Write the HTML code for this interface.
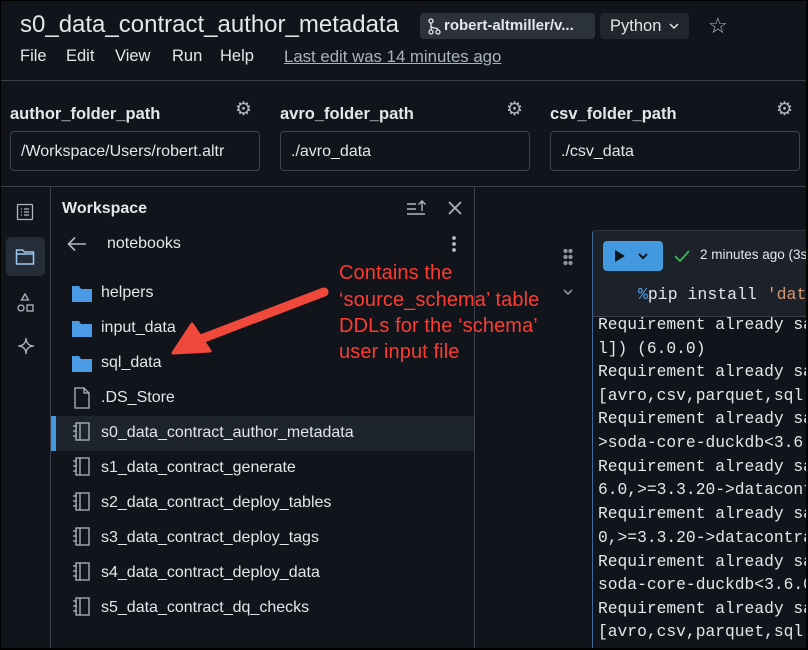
<!DOCTYPE html>
<html><head><meta charset="utf-8"><style>
*{margin:0;padding:0;box-sizing:border-box}
body{width:808px;height:650px;background:#000;overflow:hidden;font-family:"Liberation Sans",sans-serif;color:#e3e6ea;position:relative}
#f{position:absolute;left:1px;top:1px;width:805px;height:647px;background:#11151b;overflow:hidden}
.a{position:absolute;white-space:nowrap}
.inp{position:absolute;top:130px;height:40px;border:1px solid #3d444d;border-radius:4px;font-size:16px;padding:11px 10px;color:#e3e6ea;overflow:hidden;white-space:nowrap}
.lab{position:absolute;top:104px;font-size:16.5px;font-weight:bold}
.row{position:absolute;left:50px;width:423px;height:35px;font-size:16px}
.row span{position:absolute;left:50px;top:8px}
.mono{font-family:"Liberation Mono",monospace;font-size:16.3px;color:#e3e6ea;position:absolute;left:597px;white-space:nowrap}
.red{position:absolute;left:338px;color:#ff3b30;font-size:20px;white-space:nowrap;letter-spacing:0.1px}
.m{position:absolute;top:46px;font-size:16.5px}
</style></head><body><div id="f">
<div class="a" style="left:19px;top:10px;font-size:24px;font-weight:500">s0_data_contract_author_metadata</div>
<div class="a" style="left:419px;top:12px;width:175px;height:26px;background:#2b323b;border-radius:4px"></div>
<svg class="a" style="left:426px;top:17px" width="14" height="17" viewBox="0 0 14 17" fill="none" stroke="#e3e6ea" stroke-width="1.3"><circle cx="4" cy="3" r="2"/><circle cx="4" cy="14" r="2"/><circle cx="11" cy="14" r="2"/><path d="M4 5v7M4 8c0 3 7 1 7 4"/></svg>
<div class="a" style="left:443px;top:16px;font-size:15px;font-weight:bold">robert-altmiller/v...</div>
<div class="a" style="left:599px;top:12px;width:89px;height:26px;background:#21262d;border-radius:4px"></div>
<div class="a" style="left:609px;top:16px;font-size:16.5px">Python</div>
<svg class="a" style="left:668px;top:21px" width="10" height="8" viewBox="0 0 10 8"><path d="M1 2l4 4l4-4" stroke="#e3e6ea" stroke-width="1.5" fill="none"/></svg>
<div class="a" style="left:707px;top:12px;font-size:22px;color:#b0b7c0">☆</div>
<div class="m" style="left:19px">File</div>
<div class="m" style="left:65px">Edit</div>
<div class="m" style="left:114px">View</div>
<div class="m" style="left:171px">Run</div>
<div class="m" style="left:219px">Help</div>
<div class="m" style="left:283px;color:#a9b4c2;text-decoration:underline;font-size:16.8px">Last edit was 14 minutes ago</div>
<div class="a" style="left:0;top:79px;width:808px;height:1px;background:#3a414a"></div>
<div class="lab" style="left:9px">author_folder_path</div>
<div class="lab" style="left:279px">avro_folder_path</div>
<div class="lab" style="left:549px">csv_folder_path</div>
<div class="a" style="left:234px;top:97px;font-size:19px;color:#b0b7c0">⚙</div>
<div class="a" style="left:505px;top:97px;font-size:19px;color:#b0b7c0">⚙</div>
<div class="a" style="left:775px;top:97px;font-size:19px;color:#b0b7c0">⚙</div>
<div class="inp" style="left:9px;width:250px">/Workspace/Users/robert.altr</div>
<div class="inp" style="left:279px;width:250px">./avro_data</div>
<div class="inp" style="left:549px;width:250px">./csv_data</div>
<div class="a" style="left:0;top:185px;width:808px;height:1px;background:#3a414a"></div>
<div class="a" style="left:49px;top:186px;width:1px;height:470px;background:#3a414a"></div>
<div class="a" style="left:473px;top:186px;width:1px;height:470px;background:#3a414a"></div>
<svg class="a" style="left:15px;top:202px" width="18" height="18" viewBox="0 0 18 18" fill="none" stroke="#b0b7c0" stroke-width="1.3"><rect x="1.5" y="1.5" width="15" height="15" rx="1"/><path d="M5 6h1M8 6h5M5 9h1M8 9h5M5 12h1M8 12h5"/></svg>
<div class="a" style="left:5px;top:236px;width:39px;height:39px;background:#252d38;border-radius:5px"></div>
<svg class="a" style="left:14px;top:247px" width="20" height="18" viewBox="0 0 20 18" fill="none" stroke="#9fc8ee" stroke-width="1.5"><path d="M1.5 2h6l2 2h9v12h-17z M1.5 6h17"/></svg>
<svg class="a" style="left:15px;top:292px" width="18" height="20" viewBox="0 0 18 20" fill="none" stroke="#b0b7c0" stroke-width="1.3"><path d="M9 1l3.5 6h-7z"/><circle cx="5" cy="15" r="3"/><rect x="11" y="12" width="6" height="6"/></svg>
<svg class="a" style="left:16px;top:336px" width="18" height="18" viewBox="0 0 18 18" fill="none" stroke="#b0b7c0" stroke-width="1.3"><path d="M9 1C9 6 12 9 17 9C12 9 9 12 9 17C9 12 6 9 1 9C6 9 9 6 9 1Z"/></svg>
<div class="a" style="left:61px;top:199px;font-size:16px;font-weight:bold">Workspace</div>
<svg class="a" style="left:405px;top:198px" width="22" height="18" viewBox="0 0 22 18" fill="none" stroke="#b0b7c0" stroke-width="1.4"><path d="M1 5h9M1 10h9M1 15h18M16 12V2M12.5 5.5L16 2l3.5 3.5"/></svg>
<svg class="a" style="left:446px;top:199px" width="16" height="16" viewBox="0 0 16 16" stroke="#b0b7c0" stroke-width="1.6"><path d="M2 2l12 12M14 2L2 14"/></svg>
<svg class="a" style="left:66px;top:235px" width="20" height="16" viewBox="0 0 20 16" fill="none" stroke="#b0b7c0" stroke-width="1.6"><path d="M19 8H2M8 1.5L1.5 8L8 14.5"/></svg>
<div class="a" style="left:106px;top:234px;font-size:16px">notebooks</div>
<div class="a" style="left:451px;top:234px;width:4px;height:18px;background:radial-gradient(circle,#b0b7c0 1.8px,transparent 2px) 0 0/4px 6px"></div>
<div class="row" style="top:275px"><span>helpers</span></div>
<div class="row" style="top:310px"><span>input_data</span></div>
<div class="row" style="top:345px"><span>sql_data</span></div>
<div class="row" style="top:380px"><span>.DS_Store</span></div>
<div class="row" style="top:415px;background:#1d242d;border-left:5px solid #4299e0"><span style="left:45px">s0_data_contract_author_metadata</span></div>
<div class="row" style="top:450px"><span>s1_data_contract_generate</span></div>
<div class="row" style="top:485px"><span>s2_data_contract_deploy_tables</span></div>
<div class="row" style="top:520px"><span>s3_data_contract_deploy_tags</span></div>
<div class="row" style="top:555px"><span>s4_data_contract_deploy_data</span></div>
<div class="row" style="top:590px"><span>s5_data_contract_dq_checks</span></div>
<svg class="a" style="left:70px;top:283px" width="22" height="100" viewBox="0 0 22 100" fill="#4a9ae6"><path d="M1 2h7l2 3h11v13h-20z"/><path d="M1 37h7l2 3h11v13h-20z"/><path d="M1 72h7l2 3h11v13h-20z"/></svg>
<svg class="a" style="left:72px;top:386px" width="18" height="22" viewBox="0 0 18 22" fill="none" stroke="#b0b7c0" stroke-width="1.3"><path d="M2 1h9l5 5v15h-14z M11 1v5h5"/></svg>
<svg class="a" style="left:71px;top:421px" width="20" height="200" viewBox="0 0 20 200" fill="none" stroke="#b0b7c0" stroke-width="1.3">
<g id="nb"><rect x="4" y="1" width="13" height="17"/><path d="M8 1v17M1 4h4M1 9h4M1 14h4"/></g>
<use href="#nb" y="35"/><use href="#nb" y="70"/><use href="#nb" y="105"/><use href="#nb" y="140"/><use href="#nb" y="175"/></svg>
<div class="red" style="top:261px">Contains the</div>
<div class="red" style="top:288px">‘source_schema’ table</div>
<div class="red" style="top:314px">DDLs for the ‘schema’</div>
<div class="red" style="top:340px">user input file</div>
<svg class="a" style="left:160px;top:280px" width="175" height="85" viewBox="0 0 175 85"><path d="M163 11L40 58" stroke="#f0493c" stroke-width="9" stroke-linecap="round"/><path d="M12 72L31 43L49 70Z" fill="#f0493c" stroke="#f0493c" stroke-width="3" stroke-linejoin="round"/></svg>
<div class="a" style="left:562px;top:247px;width:10px;height:18px;background:radial-gradient(circle,#8b939d 2px,transparent 2.3px) 0 0/5px 6px"></div>
<svg class="a" style="left:562px;top:287px" width="10" height="8" viewBox="0 0 10 8"><path d="M1 2l4 4l4-4" stroke="#8b939d" stroke-width="1.6" fill="none"/></svg>
<div class="a" style="left:591px;top:229px;width:220px;height:87px;background:#1d222a;border-left:1px solid #3d6a98;border-top:1px solid #2c333c;border-radius:4px 0 0 0"></div>
<div class="a" style="left:591px;top:316px;width:1px;height:340px;background:#3d6a98"></div>
<div class="a" style="left:591px;top:315px;width:220px;height:1px;background:#3a414a"></div>
<div class="a" style="left:602px;top:240px;width:60px;height:30px;background:#4299e0;border-radius:4px"></div>
<svg class="a" style="left:612px;top:247px" width="44" height="16" viewBox="0 0 44 16"><path d="M2 2l10 6l-10 6z" fill="#11151b"/><path d="M26 6l4 4l4-4" stroke="#11151b" stroke-width="2" fill="none"/></svg>
<svg class="a" style="left:673px;top:248px" width="16" height="14" viewBox="0 0 16 14"><path d="M1 7l5 5l9-10" stroke="#3fb55a" stroke-width="1.8" fill="none"/></svg>
<div class="a" style="left:699px;top:246px;font-size:13.5px">2 minutes ago (3s</div>
<div class="mono" style="left:637px;top:284px;font-size:16.5px"><span style="color:#5a9fde">%</span>pip install <span style="color:#d59a73">'data</span></div>
<div class="mono" style="top:314px">Requirement already sa</div>
<div class="mono" style="top:338px">l]) (6.0.0)</div>
<div class="mono" style="top:361px">Requirement already sa</div>
<div class="mono" style="top:385px">[avro,csv,parquet,sql</div>
<div class="mono" style="top:408px">Requirement already sa</div>
<div class="mono" style="top:432px">&gt;soda-core-duckdb&lt;3.6</div>
<div class="mono" style="top:456px">Requirement already sa</div>
<div class="mono" style="top:479px">6.0,&gt;=3.3.20-&gt;datacont</div>
<div class="mono" style="top:503px">Requirement already sa</div>
<div class="mono" style="top:527px">0,&gt;=3.3.20-&gt;datacontra</div>
<div class="mono" style="top:551px">Requirement already sa</div>
<div class="mono" style="top:574px">soda-core-duckdb&lt;3.6.0</div>
<div class="mono" style="top:598px">Requirement already sa</div>
<div class="mono" style="top:621px">[avro,csv,parquet,sql</div>
</div></body></html>
